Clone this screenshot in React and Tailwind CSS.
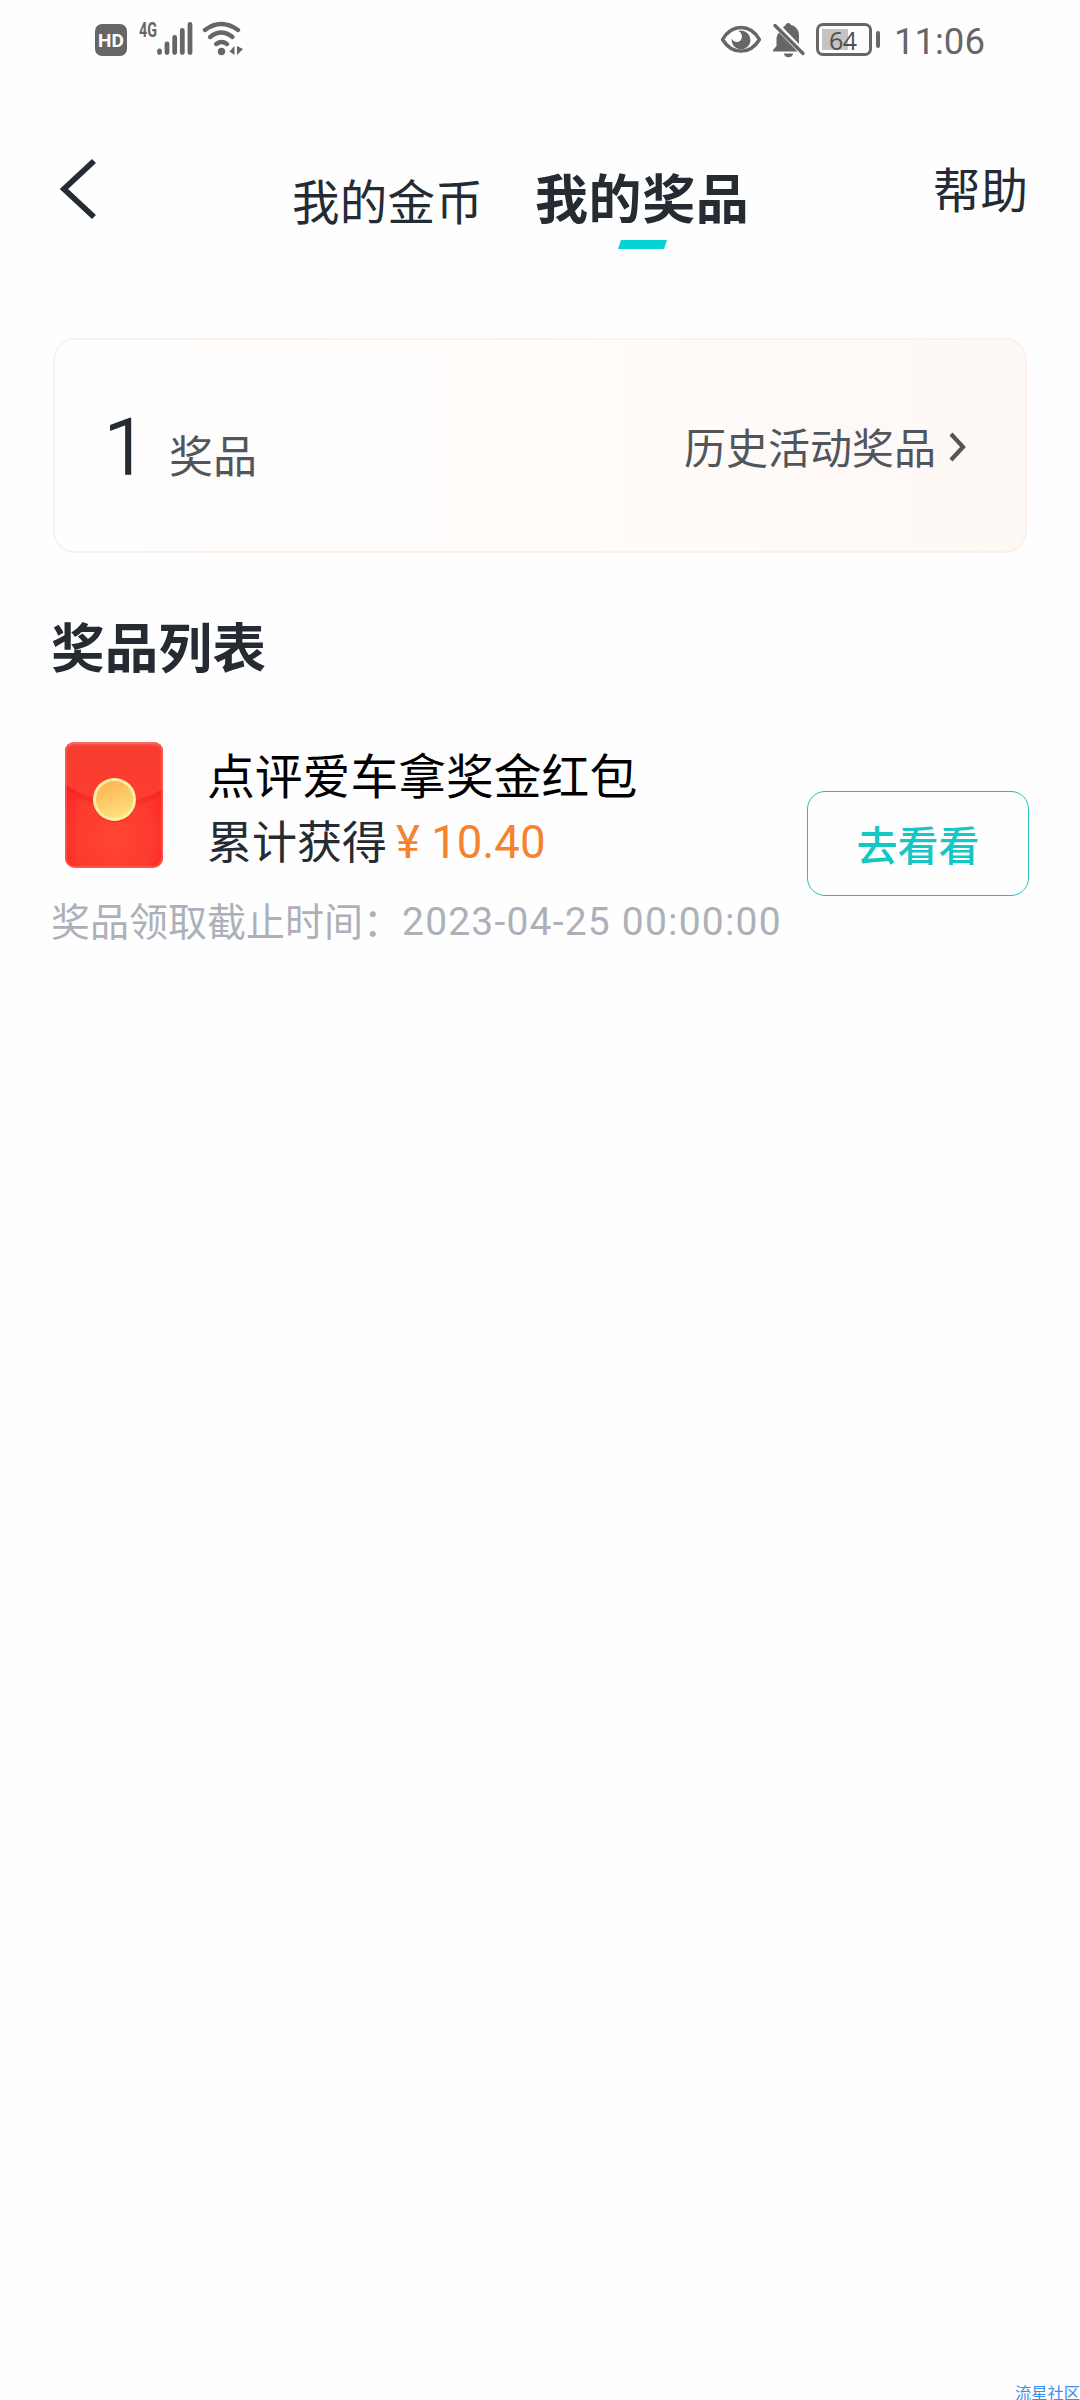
import React from "react";

const prizes = [
    {
        id: 1,
        title: "点评爱车拿奖金红包",
        label: "累计获得",
        amount: "10.40",
        deadline: "2023-04-25 00:00:00",
    },
];

const StatusBar = () => {
    return (
        <div className="flex h-20 shrink-0 items-start justify-between pl-[95px] pr-[97px] text-[#666]">
            <div className="flex items-start">
                <span className="mt-6 flex h-8 w-8 items-center justify-center rounded-[7px] bg-[#666] font-[Roboto,sans-serif] text-[19px] font-bold leading-none text-white">
                    HD
                </span>
                <svg width="56" height="40" viewBox="0 0 56 40" className="ml-[11px] mt-[18px]">
                    <text
                        x="1"
                        y="19"
                        fill="#666"
                        fontFamily="Roboto, sans-serif"
                        fontWeight="700"
                        fontSize="20"
                        textLength="18"
                        lengthAdjust="spacingAndGlyphs"
                    >
                        4G
                    </text>
                    <g stroke="#666" strokeWidth="4.8" strokeLinecap="round">
                        <path d="M21.5 33v1.5M29 26v8.5M36.7 19.5v15M44.3 12.5v22M52 6.5v28" />
                    </g>
                </svg>
                <svg width="42" height="40" viewBox="0 0 42 40" className="ml-[8px] mt-[18px]">
                    <g fill="none" stroke="#666" strokeWidth="4.4" strokeLinecap="round">
                        <path d="M3 12Q19 0 36 12" />
                        <path d="M8.2 19Q19 10 30.500 19" />
                        <path d="M14.2 26Q19.5 22 25 26" />
                    </g>
                    <circle cx="19.5" cy="33.5" r="3.7" fill="#666" />
                    <path d="M32.500 28v9l-5-3.500zM35 28v9l6-6z" fill="#666" />
                </svg>
            </div>
            <div className="flex items-start">
                <svg width="42" height="30" viewBox="0 0 42 30" className="mt-[25px]">
                    <path
                        d="M2.5 14.5C12-1.5 30-1.5 39.5 14.5C30 30 12 30 2.5 14.5Z"
                        fill="none"
                        stroke="#666"
                        strokeWidth="3.4"
                        strokeLinejoin="round"
                    />
                    <path
                        d="M20.5 5.500A9.5 9.5 0 1 1 11.6 13.5A5.5 5.5 0 0 0 20.5 15.5A6 6 0 0 0 18.5 6Z"
                        fill="#666"
                    />
                </svg>
                <svg width="34" height="36" viewBox="0 0 34 36" className="ml-[10px] mt-[22px]">
                    <path
                        d="M16 1a3 3 0 0 1 3 2c5 1 8 5.5 8 10v9L11 5.5Q12 4 13.5 3.3A3 3 0 0 1 16 1ZM7 10.5L25.5 29.5H1v-1.5l3.5-4V16Q4.8 13 7 10.5ZM12 31.5h9a4.5 3.8 0 0 1-9 0Z"
                        fill="#666"
                    />
                    <path d="M3 3.5L31 31.5" stroke="#666" strokeWidth="3.4" strokeLinecap="round" />
                </svg>
                <div className="ml-[10px] mt-[23px] flex items-center gap-1">
                    <div className="h-[33px] w-[56px] rounded-[7px] border-[3px] border-[#666] p-[3px]">
                        <div className="flex h-[21px] w-[26px] justify-start bg-[#c3c3c3] pl-[7px]">
                            <span className="font-['Open_Sans',sans-serif] text-[25px] leading-[22px] tracking-[-0.5px] text-[#4f4f4f]">
                                64
                            </span>
                        </div>
                    </div>
                    <div className="h-[17px] w-[4px] rounded-sm bg-[#666]" />
                </div>
                <span className="ml-[14px] mt-[23px] w-[89px] font-[Roboto,sans-serif] text-[36.5px] leading-[38px]">
                    11:06
                </span>
            </div>
        </div>
    );
};

const NavBar = () => {
    return (
        <div className="flex h-[258px] items-start pl-[58px] pr-[52px] text-[#252b33]">
            <svg width="40" height="64" viewBox="0 0 40 64" className="mt-[77px]">
                <path d="M36 4L6 32L36 60" fill="none" stroke="currentColor" strokeWidth="5.8" />
            </svg>
            <span className="ml-[194px] mt-[88px] w-[190px] whitespace-nowrap text-[47.5px] leading-[64px] tracking-[0.3px]">
                我的金币
            </span>
            <div className="ml-[53px] mt-[84px] flex flex-col items-center">
                <span className="text-[53px] font-bold leading-[64px] tracking-[0.6px]">我的奖品</span>
                <svg width="49" height="9" viewBox="0 0 49 9" className="mt-[12px]">
                    <path d="M3 0H49L46 9H0Z" fill="#05d3d6" />
                </svg>
            </div>
            <span className="ml-auto mt-[76px] text-[47.5px] leading-[64px]">帮助</span>
        </div>
    );
};

const PrizeSummary = ({ count }) => {
    return (
        <div className="mx-[53px] flex h-[215px] items-start rounded-[22px] border-2 border-[#fcf0ea] bg-linear-to-r from-[#fefefe] via-[#fffcfa] to-[#fef8f5] pl-[49px] pr-[57px]">
            <span className="mt-[68px] w-[65px] font-[Roboto,sans-serif] text-[78px] font-light leading-[80px] text-[#252b33] [-webkit-text-stroke:1.5px_#252b33]">
                {count}
            </span>
            <span className="mt-[84px] text-[44px] leading-[60px] text-[#51565d]">奖品</span>
            <div className="ml-auto mt-[76px] flex items-center text-[#51565d]">
                <span className="text-[42px] leading-[60px]">历史活动奖品</span>
                <svg width="22" height="34" viewBox="0 0 22 34" className="ml-[10px]">
                    <path d="M5 5L17 18L5 31" fill="none" stroke="currentColor" strokeWidth="4.2" />
                </svg>
            </div>
        </div>
    );
};

const RedEnvelope = () => {
    return (
        <svg width="98" height="126" viewBox="0 0 98 126" className="shrink-0">
            <defs>
                <radialGradient id="body" cx="0.5" cy="0.75" r="0.65">
                    <stop offset="0" stopColor="#ff4632" />
                    <stop offset="0.6" stopColor="#fd3b2e" />
                    <stop offset="1" stopColor="#fa2024" />
                </radialGradient>
                <linearGradient id="flap" x1="0" x2="0" y1="0" y2="1">
                    <stop offset="0" stopColor="#f6655c" />
                    <stop offset="0.08" stopColor="#f73c30" />
                    <stop offset="1" stopColor="#fd3e2f" />
                </linearGradient>
                <linearGradient id="coin" x1="0.3" x2="0.6" y1="0" y2="1">
                    <stop offset="0" stopColor="#fcb455" />
                    <stop offset="1" stopColor="#ffe07c" />
                </linearGradient>
            </defs>
            <rect width="98" height="126" rx="10" fill="url(#body)" />
            <path d="M0 42Q49 76 98 47V52Q49 81 0 47Z" fill="#ee2424" opacity="0.4" />
            <path d="M10 0H88Q98 0 98 10V47Q49 76 0 42V10Q0 0 10 0Z" fill="url(#flap)" />
            <rect x="1" y="1" width="96" height="124" rx="9" fill="none" stroke="#fa7a70" strokeWidth="2" opacity="0.45" />
            <circle cx="49.5" cy="59" r="21.5" fill="#d92c1c" opacity="0.5" />
            <circle cx="49.5" cy="57.5" r="21.5" fill="#fff0a0" />
            <circle cx="49.5" cy="57.5" r="18.5" fill="url(#coin)" />
        </svg>
    );
};

const PrizeItem = ({ prize }) => {
    return (
        <div className="flex items-start justify-between">
            <div>
                <div className="flex items-start pl-[13px] pt-[2px]">
                    <RedEnvelope />
                    <div className="ml-[44px]">
                        <p className="text-[47.8px] leading-[64px] text-black">{prize.title}</p>
                        <div className="flex items-center pt-[1px] text-[#252b33]">
                            <span className="text-[45px] leading-[66px]">{prize.label}</span>
                            <span className="ml-[9px] mt-[6px] font-[Roboto,sans-serif] text-[45.5px] leading-[60px] text-[#f5822d]">
                                ¥ {prize.amount}
                            </span>
                        </div>
                    </div>
                </div>
                <div className="mt-[15px] flex items-center text-[39px] leading-[56px] text-[#acb1b9]">
                    <span className="-ml-px">奖品领取截止时间：</span>
                    <span className="mt-[6px] whitespace-nowrap font-[Roboto,sans-serif] tracking-[1.2px]">
                        {prize.deadline}
                    </span>
                </div>
            </div>
            <button className="mt-[51px] h-[105px] w-[222px] shrink-0 rounded-[18px] border border-[#20c0bd] pb-[2px] text-[41px] font-medium leading-[60px] text-[#14c6c5]">
                去看看
            </button>
        </div>
    );
};

const App = () => {
    return (
        <div className="flex h-[2400px] w-[1080px] flex-col overflow-hidden bg-[#fefefe] font-['Noto_Sans_CJK_SC',sans-serif]">
            <StatusBar />
            <NavBar />
            <PrizeSummary count={prizes.length} />
            <h2 className="ml-[51px] mt-[60px] text-[53.5px] font-bold leading-[64px] tracking-[0.3px] text-[#252b33]">
                奖品列表
            </h2>
            <div className="mt-[63px] pl-[52px] pr-[51px]">
                {prizes.map((prize) => (
                    <PrizeItem key={prize.id} prize={prize} />
                ))}
            </div>
            <div className="ml-auto mt-auto h-4 w-[65px] whitespace-nowrap text-[16.25px] leading-4 text-[#3c8fe6]">
                流星社区
            </div>
        </div>
    );
};

export default App;
